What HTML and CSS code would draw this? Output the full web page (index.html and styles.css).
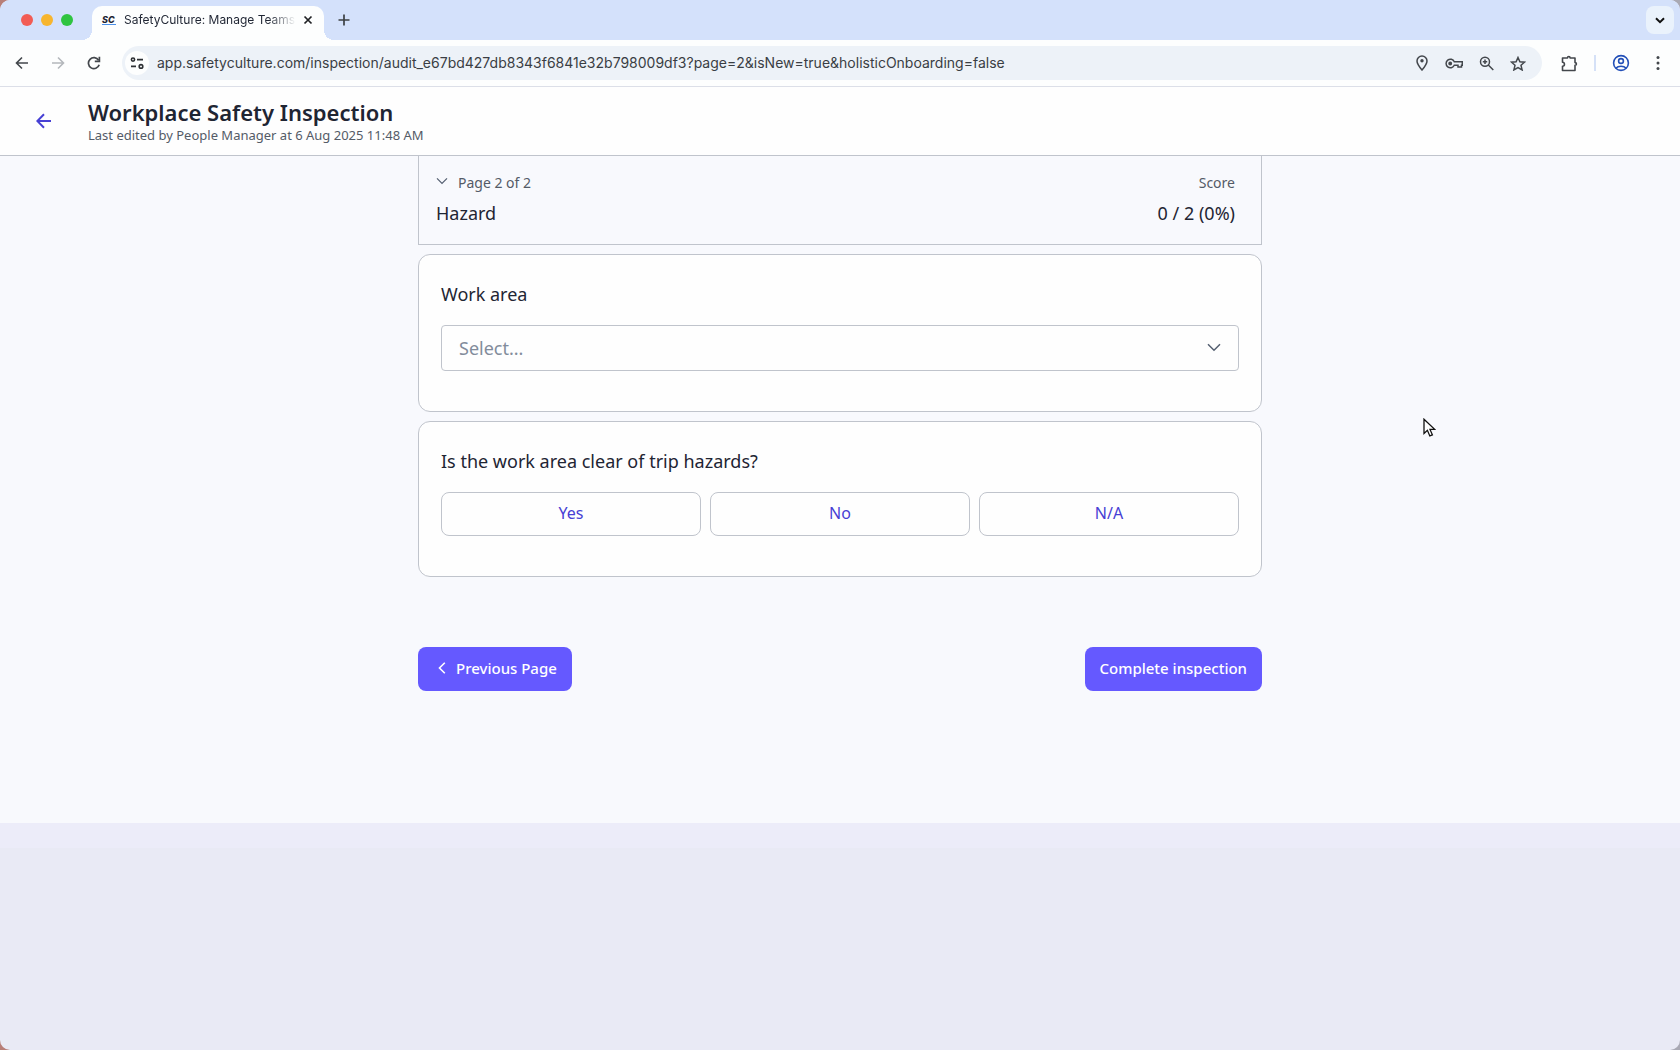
FILE: index.html
```html
<!DOCTYPE html>
<html lang="en">
<head>
<meta charset="utf-8">
<meta name="viewport" content="width=device-width, initial-scale=1">
<title>SafetyCulture: Manage Teams</title>
<link rel="stylesheet" href="styles.css">
</head>
<body>
<div class="window">
  <div class="tab-strip">
    <div class="traffic-lights">
      <span class="light light-close"></span>
      <span class="light light-minimize"></span>
      <span class="light light-zoom"></span>
    </div>
    <div class="tab">
      <span class="favicon">SC</span>
      <span class="tab-title">SafetyCulture: Manage Teams</span>
      <button class="icon-button tab-close" type="button" aria-label="Close tab">
        <svg width="10" height="10" viewBox="0 0 10 10"><path d="M1.5 1.5l7 7M8.5 1.5l-7 7" stroke="#202124" stroke-width="1.7"/></svg>
      </button>
    </div>
    <button class="icon-button new-tab" type="button" aria-label="New tab">
      <svg width="12" height="12" viewBox="0 0 12 12"><path d="M6 .5v11M.5 6h11" stroke="#3c4043" stroke-width="1.7"/></svg>
    </button>
    <button class="icon-button tab-search" type="button" aria-label="Search tabs">
      <svg width="10" height="7" viewBox="0 0 10 7"><path d="M1 1.2l4 4 4-4" fill="none" stroke="#111" stroke-width="2"/></svg>
    </button>
  </div>

  <div class="toolbar">
    <div class="nav-buttons">
      <button class="icon-button" type="button" aria-label="Back">
        <svg width="14" height="14" viewBox="0 0 14 14"><path d="M13 7H1.8M7 1.5L1.5 7 7 12.5" fill="none" stroke="#43474c" stroke-width="1.6"/></svg>
      </button>
      <button class="icon-button" type="button" aria-label="Forward">
        <svg width="14" height="14" viewBox="0 0 14 14"><path d="M1 7h11.2M7 1.5L12.5 7 7 12.5" fill="none" stroke="#b4b8bc" stroke-width="1.6"/></svg>
      </button>
      <button class="icon-button" type="button" aria-label="Reload">
        <svg width="14" height="14" viewBox="0 0 14 14"><path d="M12.2 8.8A5.5 5.5 0 1 1 11.6 4.2" fill="none" stroke="#43474c" stroke-width="1.7"/><path d="M12.4.8v4.6H7.8" fill="none" stroke="#43474c" stroke-width="1.7"/></svg>
      </button>
    </div>
    <div class="address-bar">
      <button class="icon-button site-info" type="button" aria-label="View site information">
        <svg width="14" height="12" viewBox="0 0 14 12" fill="none" stroke="#2d3034" stroke-width="1.6"><circle cx="3" cy="2.6" r="1.6"/><path d="M7 2.6h6M1 9.4h5"/><circle cx="11" cy="9.4" r="1.8"/></svg>
      </button>
      <input class="url" type="text" aria-label="Address and search bar" value="app.safetyculture.com/inspection/audit_e67bd427db8343f6841e32b798009df3?page=2&amp;isNew=true&amp;holisticOnboarding=false">
      <div class="address-actions">
        <button class="icon-button" type="button" aria-label="Location">
          <svg width="12" height="16" viewBox="0 0 12 16"><path d="M6 15C3 11.500 1 8.800 1 6a5 5 0 0 1 10 0c0 2.800-2 5.500-5 9z" fill="none" stroke="#43474c" stroke-width="1.500"/><circle cx="6" cy="5.800" r="1.700" fill="#43474c"/></svg>
        </button>
        <button class="icon-button" type="button" aria-label="Passwords">
          <svg width="18" height="11" viewBox="0 0 18 11" fill="none" stroke="#43474c" stroke-width="1.500"><path d="M9.300 3.700A4.300 4.300 0 1 0 9.300 7.300h3.700v1.800h3.500V7.200h.8V3.700z"/><circle cx="5.200" cy="5.500" r="1.200" fill="#43474c"/></svg>
        </button>
        <button class="icon-button" type="button" aria-label="Zoom">
          <svg width="15" height="15" viewBox="0 0 15 15" fill="none" stroke="#43474c" stroke-width="1.500"><circle cx="6" cy="5.700" r="4.500"/><path d="M9.300 9l5 5M6 3.500v4.400M3.800 5.700h4.400"/></svg>
        </button>
        <button class="icon-button" type="button" aria-label="Bookmark this tab">
          <svg width="16" height="15" viewBox="0 0 16 15"><path d="M8 1.500l1.900 4.300 4.600.4-3.500 3.100 1.100 4.600L8 11.500l-4.100 2.400L5 9.300 1.500 6.200l4.600-.4z" fill="none" stroke="#43474c" stroke-width="1.500"/></svg>
        </button>
      </div>
    </div>
    <div class="toolbar-actions">
      <button class="icon-button" type="button" aria-label="Extensions">
        <svg width="17" height="17" viewBox="0 0 17 17"><path d="M1.500 3h5c0-2 2.600-2 2.600 0H14v4.600c1.900 0 1.900 2.600 0 2.600V15.500H1.500v-4.200c2.600-.2 2.600-3.900 0-4.100z" fill="none" stroke="#43474c" stroke-width="1.600" stroke-linejoin="round"/></svg>
      </button>
      <span class="toolbar-divider"></span>
      <button class="icon-button" type="button" aria-label="Profile">
        <svg width="18" height="18" viewBox="0 0 18 18" fill="none" stroke="#2350b8" stroke-width="1.600"><circle cx="9" cy="9" r="7.400"/><circle cx="9" cy="7" r="2.400"/><path d="M3.800 14.200c2.500-2.600 7.900-2.600 10.400 0"/></svg>
      </button>
      <button class="icon-button" type="button" aria-label="Menu">
        <svg width="4" height="14" viewBox="0 0 4 14" fill="#43474c"><circle cx="2" cy="1.600" r="1.500"/><circle cx="2" cy="7" r="1.500"/><circle cx="2" cy="12.400" r="1.500"/></svg>
      </button>
    </div>
  </div>

  <header class="page-header">
    <a class="back-link" href="#" aria-label="Back to inspections">
      <svg width="16" height="16" viewBox="0 0 16 16"><path d="M15 8H1.800M8 1.300L1.300 8 8 14.700" fill="none" stroke="#4740d4" stroke-width="2"/></svg>
    </a>
    <div>
      <h1 class="page-title">Workplace Safety Inspection</h1>
      <p class="page-subtitle">Last edited by People Manager at 6 Aug 2025 11:48 AM</p>
    </div>
  </header>

  <main class="content">
    <div class="form">
      <section class="section-header">
        <div>
          <button class="page-picker" type="button">
            <svg class="page-picker-arrow" width="12" height="8" viewBox="0 0 12 8"><path d="M1 1.300l5 5 5-5" fill="none" stroke="#545f70" stroke-width="1.200"/></svg>
            Page 2 of 2
          </button>
          <h2 class="section-value">Hazard</h2>
        </div>
        <div class="score">
          <div class="section-label">Score</div>
          <div class="section-value">0 / 2 (0%)</div>
        </div>
      </section>

      <section class="card">
        <label class="question" for="work-area">Work area</label>
        <div class="select-box">
          <select class="select" id="work-area">
            <option>Select...</option>
          </select>
          <svg class="select-arrow" width="14" height="9" viewBox="0 0 14 9"><path d="M1 1.300l6 6 6-6" fill="none" stroke="#545f70" stroke-width="1.500"/></svg>
        </div>
      </section>

      <section class="card" role="group" aria-labelledby="trip-hazards">
        <div class="question" id="trip-hazards">Is the work area clear of trip hazards?</div>
        <div class="answers">
          <button class="answer" type="button">Yes</button>
          <button class="answer" type="button">No</button>
          <button class="answer" type="button">N/A</button>
        </div>
      </section>

      <div class="form-actions">
        <button class="primary primary-back" type="button">
          <svg width="8" height="12" viewBox="0 0 8 12"><path d="M6.800.8L1.500 6l5.300 5.200" fill="none" stroke="#fff" stroke-width="1.600"/></svg>
          Previous Page
        </button>
        <button class="primary" type="button">Complete inspection</button>
      </div>
    </div>
  </main>

  <svg class="cursor" width="13" height="20" viewBox="0 0 13 20"><path d="M1 1.200v14.300l3.400-3.200 2.400 5.600 2.600-1.100-2.400-5.400h4.700z" fill="#fff" stroke="#111" stroke-width="1.300"/></svg>
</div>
</body>
</html>
```
FILE: styles.css
```css
* {
  box-sizing: border-box;
}

body {
  margin: 0;
  background: linear-gradient(90deg, #b87f78, #a9a9b4);
  font-family: "Noto Sans", sans-serif;
  color: #1f2533;
}

button,
input,
select {
  font: inherit;
  color: inherit;
}

h1,
h2,
p {
  margin: 0;
}

svg {
  display: block;
  flex: none;
}

.window {
  position: relative;
  display: flex;
  flex-direction: column;
  min-height: 100vh;
  border-radius: 10px;
  overflow: hidden;
  background: linear-gradient(#ececf9 0, #ececf9 848px, #e9eaf5 848px);
}

.icon-button {
  display: flex;
  align-items: center;
  justify-content: center;
  flex: none;
  width: 24px;
  height: 24px;
  padding: 0;
  border: 0;
  border-radius: 50%;
  background: none;
}

/* Tab strip */

.tab-strip {
  display: flex;
  align-items: center;
  height: 40px;
  padding: 0 6px 0 21px;
  background: #d4e1fb;
  font-family: Inter, sans-serif;
}

.traffic-lights {
  display: flex;
  gap: 8px;
  margin-right: 19px;
}

.light {
  width: 12px;
  height: 12px;
  border-radius: 50%;
}

.light-close {
  background: #f25c54;
}

.light-minimize {
  background: #f7b52e;
}

.light-zoom {
  background: #2fc440;
}

.tab {
  position: relative;
  display: flex;
  align-items: center;
  align-self: flex-end;
  width: 232px;
  height: 34px;
  padding: 0 4px 6px 10px;
  border-radius: 10px 10px 0 0;
  background: #fdfefe;
}

.tab::before,
.tab::after {
  content: "";
  position: absolute;
  bottom: 0;
  width: 10px;
  height: 10px;
}

.tab::before {
  right: 100%;
  background: radial-gradient(circle at 0 0, transparent 10px, #fdfefe 10px);
}

.tab::after {
  left: 100%;
  background: radial-gradient(circle at 100% 0, transparent 10px, #fdfefe 10px);
}

.favicon {
  width: 14px;
  border-bottom: 1px solid #4a8fe8;
  font-size: 9px;
  line-height: 9px;
  font-weight: 800;
  font-style: italic;
}

.tab-title {
  flex: 1;
  margin-left: 8px;
  overflow: hidden;
  white-space: nowrap;
  font-size: 12px;
  line-height: 16px;
  mask-image: linear-gradient(90deg, #000 84%, transparent);
}

.new-tab {
  margin-left: 8px;
}

.tab-search {
  width: 28px;
  height: 28px;
  margin-left: auto;
  border-radius: 8px;
  background: #eaf2fc;
}

/* Toolbar */

.toolbar {
  display: flex;
  align-items: center;
  height: 47px;
  padding: 0 10px;
  border-bottom: 1px solid #dcdfe8;
  background: #fdfefe;
}

.nav-buttons {
  display: flex;
  gap: 12px;
  margin-right: 16px;
}

.address-bar {
  display: flex;
  align-items: center;
  flex: 1;
  height: 34px;
  padding: 0 12px 0 3px;
  border-radius: 17px;
  background: #edf2f8;
}

.site-info {
  background: #fdfefe;
}

.url {
  flex: 1;
  min-width: 0;
  margin-left: 8px;
  padding: 0;
  border: 0;
  background: none;
  font-family: Inter, sans-serif;
  font-size: 14px;
  line-height: 20px;
  color: #3a3e44;
}

.address-actions {
  display: flex;
  gap: 8px;
}

.toolbar-actions {
  display: flex;
  align-items: center;
  gap: 13px;
  margin-left: 15px;
}

.toolbar-divider {
  width: 2px;
  height: 16px;
  background: #d5e1f7;
}

/* Inspection header */

.page-header {
  display: flex;
  align-items: center;
  gap: 36px;
  height: 69px;
  padding: 0 36px;
  border-bottom: 1px solid #c0c4cc;
  background: #fefefe;
}

.page-title {
  font-size: 22px;
  line-height: 28px;
  font-weight: 600;
}

.page-subtitle {
  font-size: 13px;
  line-height: 18px;
  color: #545b67;
}

/* Inspection form */

.content {
  padding: 0 24px 132px;
  background: #f8f9fd;
}

.form {
  display: flex;
  flex-direction: column;
  gap: 9px;
  max-width: 844px;
  margin: 0 auto;
}

.section-header {
  display: flex;
  justify-content: space-between;
  padding: 17px 26px 17px 17px;
  border: 1px solid #c0c4cc;
  border-top: 0;
}

.score {
  text-align: right;
}

.page-picker,
.section-label {
  font-size: 14px;
  line-height: 20px;
  color: #545b67;
}

.page-picker {
  display: flex;
  align-items: flex-start;
  gap: 10px;
  padding: 0;
  border: 0;
  background: none;
}

.page-picker-arrow {
  margin-top: 4px;
}

.section-value {
  margin-top: 6px;
  font-size: 18px;
  line-height: 28px;
  font-weight: 400;
}

.card {
  padding: 27px 22px 40px;
  border: 1px solid #c0c4cc;
  border-radius: 12px;
  background: #fefefe;
}

.question {
  display: block;
  margin-bottom: 19px;
  font-size: 18px;
  line-height: 24px;
}

.select-box {
  position: relative;
}

.select {
  display: block;
  width: 100%;
  height: 46px;
  padding: 0 48px 0 17px;
  border: 1px solid #c0c4cc;
  border-radius: 4px;
  appearance: none;
  background: none;
  font-size: 18px;
  color: #828c9b;
}

.select-arrow {
  position: absolute;
  top: 18px;
  right: 18px;
  pointer-events: none;
}

.answers {
  display: grid;
  grid-template-columns: repeat(3, 1fr);
  gap: 9px;
}

.answer {
  height: 44px;
  padding: 0 0 2px;
  border: 1px solid #c0c4cc;
  border-radius: 8px;
  background: none;
  font-size: 16px;
  color: #4740d4;
}

.form-actions {
  display: flex;
  justify-content: space-between;
  margin-top: 61px;
}

.primary {
  display: flex;
  align-items: center;
  gap: 10px;
  height: 44px;
  padding: 0 15px 2px;
  border: 0;
  border-radius: 8px;
  background: #6559ff;
  font-size: 15px;
  font-weight: 500;
  color: #fff;
}

.primary-back {
  padding-left: 20px;
}

/* Mouse pointer */

.cursor {
  position: absolute;
  top: 418px;
  left: 1423px;
}
```
